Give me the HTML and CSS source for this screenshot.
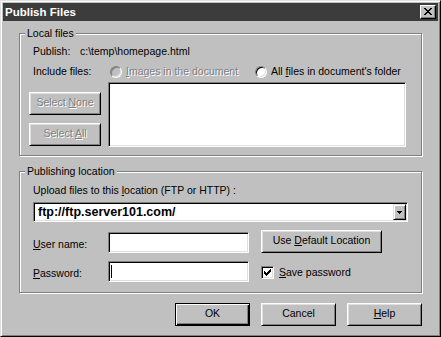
FILE: index.html
```html
<!DOCTYPE html>
<html lang="en">
<head>
    <meta charset="UTF-8">
    <title>Publish Files</title>
    <link rel="stylesheet" href="styles.css">
</head>
<body>
    <div class="window">
        <div class="titlebar">
            <span class="title">Publish Files</span>
            <button class="close-btn" type="button">
                <svg width="8" height="7" viewBox="0 0 8 7" shape-rendering="crispEdges">
                    <path d="M0 0h2v1H0z M6 0h2v1H6z M1 1h2v1H1z M5 1h2v1H5z M2 2h4v1H2z M3 3h2v1H3z M2 4h4v1H2z M1 5h2v1H1z M5 5h2v1H5z M0 6h2v1H0z M6 6h2v1H6z" fill="#000"/>
                </svg>
            </button>
        </div>

        <div class="client">
            <div class="group group-local">
                <span class="group-title">Local files</span>
                <div class="row">
                    <span class="label-publish">Publish:</span>
                    <span>c:\temp\homepage.html</span>
                </div>
                <div class="row row-include">
                    <span class="label-include">Include files:</span>
                    <label class="option option-images disabled">
                        <span class="radio"></span>
                        <span><u>I</u>mages in the document</span>
                    </label>
                    <label class="option">
                        <span class="radio"></span>
                        <span>All <u>f</u>iles in document's folder</span>
                    </label>
                </div>
                <div class="list-row">
                    <div class="list-buttons">
                        <button class="btn disabled" type="button"><span>Select <u>N</u>one</span></button>
                        <button class="btn disabled" type="button"><span>Select <u>A</u>ll</span></button>
                    </div>
                    <div class="listbox"></div>
                </div>
            </div>

            <div class="group group-publishing">
                <span class="group-title">Publishing location</span>
                <div class="upload-label">Upload files to this <u>l</u>ocation (FTP or HTTP) :</div>
                <div class="combo">
                    <span class="combo-value">ftp://ftp.server101.com/</span>
                    <span class="combo-arrow">
                        <svg width="5" height="3" viewBox="0 0 5 3" shape-rendering="crispEdges">
                            <path d="M0 0h5v1H0z M1 1h3v1H1z M2 2h1v1H2z" fill="#000"/>
                        </svg>
                    </span>
                </div>
                <div class="field-row row-user">
                    <span class="field-label"><u>U</u>ser name:</span>
                    <div class="input"></div>
                    <button class="btn btn-location" type="button"><span>Use <u>D</u>efault Location</span></button>
                </div>
                <div class="field-row row-pass">
                    <span class="field-label"><u>P</u>assword:</span>
                    <div class="input"><span class="caret"></span></div>
                    <label class="check-option">
                        <span class="checkbox">
                            <svg width="7" height="7" viewBox="0 0 7 7" shape-rendering="crispEdges">
                                <path d="M6 0h1v1H6z M5 1h2v1H5z M0 2h1v1H0z M4 2h3v1H4z M0 3h2v1H0z M3 3h3v1H3z M0 4h5v1H0z M1 5h3v1H1z M2 6h1v1H2z" fill="#000"/>
                            </svg>
                        </span>
                        <span class="check-text"><u>S</u>ave password</span>
                    </label>
                </div>
            </div>

            <div class="actions">
                <button class="btn btn-action btn-default" type="button"><span>OK</span></button>
                <button class="btn btn-action" type="button"><span>Cancel</span></button>
                <button class="btn btn-action" type="button"><span><u>H</u>elp</span></button>
            </div>
        </div>
    </div>
</body>
</html>
```

FILE: styles.css
```css
* {
    margin: 0;
    padding: 0;
    box-sizing: border-box;
}

body {
    background: #c0c0c0;
    color: #000;
    font-family: "Liberation Sans", Arial, sans-serif;
    font-size: 10.5px;
    line-height: 13px;
}

u {
    text-decoration: underline;
    text-underline-offset: 1px;
}

.window {
    width: 441px;
    height: 337px;
    padding: 2px;
    background: #c0c0c0;
    border: 1px solid;
    border-color: #dfdfdf #000 #000 #dfdfdf;
    box-shadow: inset 1px 1px #fff, inset -1px -1px #808080;
}

.titlebar {
    height: 18px;
    padding: 0 2px;
    background: #3c3c3c;
    display: flex;
    align-items: center;
    justify-content: space-between;
}

.title {
    color: #fff;
    font-weight: bold;
    font-size: 11.5px;
    line-height: 18px;
}

.close-btn {
    width: 16px;
    height: 14px;
    padding-bottom: 1px;
    background: #c0c0c0;
    border: 1px solid;
    border-color: #fff #000 #000 #fff;
    box-shadow: inset -1px -1px #808080;
    display: flex;
    align-items: center;
    justify-content: center;
}

.client {
    padding: 12px 0 0 16px;
}

/* group boxes */
.group {
    position: relative;
    width: 403px;
    border: 1px solid #808080;
    box-shadow: 1px 1px 0 #fff, inset 1px 1px 0 #fff;
}

.group-title {
    position: absolute;
    top: -7px;
    left: 5px;
    padding: 0 2px;
    background: #c0c0c0;
}

.group-local {
    padding: 11px 0 8px 9px;
}

.group-publishing {
    margin-top: 15px;
    padding: 12px 0 10px 13px;
}

.row {
    display: flex;
    align-items: center;
    height: 13px;
    margin-left: 4px;
}

.row-include {
    margin-top: 7px;
}

.label-publish {
    width: 47px;
}

.label-include {
    width: 77px;
}

.option {
    display: flex;
    align-items: center;
    gap: 4px;
}

.option-images {
    width: 145px;
}

.disabled {
    color: #808080;
    text-shadow: 1px 1px 0 #fff;
}

.radio {
    width: 12px;
    height: 12px;
    border-radius: 50%;
    background: #fff;
    border: 1px solid;
    border-color: #808080 #fff #fff #808080;
    box-shadow: inset 1px 1px #000, inset -1px -1px #dfdfdf;
}

.option.disabled .radio {
    background: #c0c0c0;
    box-shadow: inset 1px 1px #808080, inset -1px -1px #dfdfdf;
}

.list-row {
    display: flex;
    gap: 7px;
    margin-top: 4px;
}

.list-buttons {
    width: 72px;
    padding-top: 10px;
    display: flex;
    flex-direction: column;
    gap: 8px;
}

/* sunken fields */
.listbox,
.combo,
.input,
.checkbox {
    background: #fff;
    border: 1px solid;
    border-color: #808080 #fff #fff #808080;
    box-shadow: inset 1px 1px #000, inset -1px -1px #dfdfdf;
}

.listbox {
    width: 298px;
    height: 65px;
}

/* buttons */
.btn {
    height: 23px;
    padding-bottom: 2px;
    font: inherit;
    color: #000;
    background: #c0c0c0;
    border: 1px solid;
    border-color: #fff #000 #000 #fff;
    box-shadow: inset 1px 1px #dfdfdf, inset -1px -1px #808080;
    display: flex;
    align-items: center;
    justify-content: center;
}

.btn.disabled {
    color: #808080;
}

.upload-label {
    height: 13px;
}

.combo {
    width: 375px;
    height: 20px;
    margin-top: 5px;
    padding: 1px 1px 1px 4px;
    display: flex;
    align-items: flex-start;
    justify-content: space-between;
}

.combo-value {
    font-weight: bold;
    font-size: 12.5px;
    line-height: 14px;
    padding-top: 1px;
}

.combo-arrow {
    width: 13px;
    height: 16px;
    background: #c0c0c0;
    border: 1px solid;
    border-color: #dfdfdf #000 #000 #dfdfdf;
    box-shadow: inset 1px 1px #fff, inset -1px -1px #808080;
    display: flex;
    align-items: center;
    justify-content: center;
}

.field-row {
    display: flex;
    align-items: flex-start;
    margin-top: 8px;
}

.field-label {
    width: 75px;
}

.row-user .field-label {
    margin-top: 8px;
}

.row-user .input {
    margin-top: 2px;
}

.row-pass .field-label {
    margin-top: 6px;
}

.input {
    width: 141px;
    height: 21px;
    padding: 3px 0 0 2px;
}

.caret {
    display: block;
    width: 1px;
    height: 13px;
    background: #000;
}

.btn-location {
    width: 121px;
    margin-left: 12px;
}

.check-option {
    margin-left: 12px;
    margin-top: 4px;
    display: flex;
    align-items: center;
    gap: 5px;
}

.checkbox {
    width: 13px;
    height: 13px;
    display: flex;
    align-items: center;
    justify-content: center;
}

.check-text {
    padding-top: 1px;
}

.actions {
    width: 403px;
    margin-top: 10px;
    display: flex;
    justify-content: flex-end;
    gap: 11px;
}

.btn-action {
    width: 75px;
}

.btn-default {
    border-color: #000;
    box-shadow: inset 1px 1px #fff, inset -1px -1px #000, inset -2px -2px #808080;
}
```
